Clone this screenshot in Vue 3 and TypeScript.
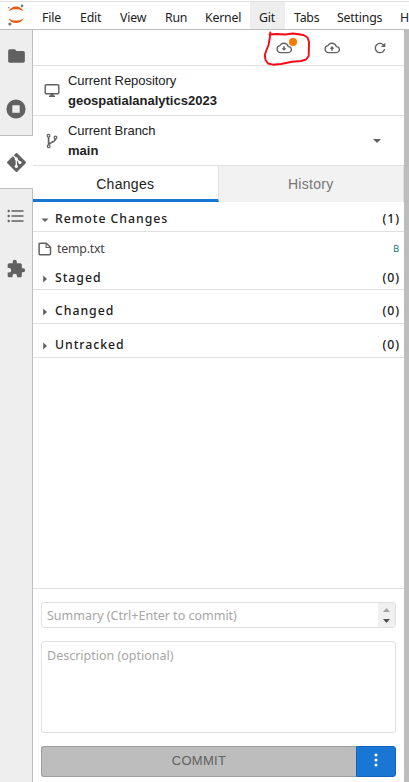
<script setup lang="ts">
interface MenuEntry { label: string; width: number; active?: boolean }
interface FileGroup { title: string; count: number; open: boolean; files: { name: string; status: string }[] }

const menu: MenuEntry[] = [
  { label: 'File', width: 38 },
  { label: 'Edit', width: 40 },
  { label: 'View', width: 45 },
  { label: 'Run', width: 40 },
  { label: 'Kernel', width: 54 },
  { label: 'Git', width: 35, active: true },
  { label: 'Tabs', width: 43 },
  { label: 'Settings', width: 63 },
  { label: 'H', width: 18 },
]

const groups: FileGroup[] = [
  { title: 'Remote Changes', count: 1, open: true, files: [{ name: 'temp.txt', status: 'B' }] },
  { title: 'Staged', count: 0, open: false, files: [] },
  { title: 'Changed', count: 0, open: false, files: [] },
  { title: 'Untracked', count: 0, open: false, files: [] },
]
</script>

<template>
  <div class="app">
    <header class="menubar">
      <div class="logo">
        <svg width="18" height="22" viewBox="0 0 18 22">
          <path d="M1.5 7.5C3 4 6 2.600 9 2.600S15 4 16.500 7.500C14.500 5.800 12 5.200 9 5.200S3.500 5.800 1.500 7.500Z" fill="#e65a14" />
          <path d="M1.500 14.200C3 17.700 6 19 9 19S15 17.700 16.500 14.200C14.500 15.900 12 16.500 9 16.500S3.500 15.900 1.500 14.200Z" fill="#e65a14" />
          <circle cx="15" cy="1.900" r="1.300" fill="#757575" />
          <circle cx="1.900" cy="3.800" r=".8" fill="#757575" />
          <circle cx="2.900" cy="20" r="1.600" fill="#757575" />
        </svg>
      </div>
      <nav class="menu">
        <span v-for="m in menu" :key="m.label" class="menu-item" :class="{ active: m.active }" :style="{ width: m.width + 'px' }">{{ m.label }}</span>
      </nav>
    </header>

    <div class="body">
      <aside class="sidebar">
        <div class="side-tab first">
          <svg width="21" height="20" viewBox="0 0 24 24"><path fill="#616161" d="M10 4H4c-1.100 0-2 .9-2 2v12c0 1.100.9 2 2 2h16c1.100 0 2-.9 2-2V8c0-1.100-.9-2-2-2h-8z" /></svg>
        </div>
        <div class="side-tab">
          <svg width="20" height="20" viewBox="0 0 20 20"><path fill="#616161" fill-rule="evenodd" d="M10 .4a9.600 9.600 0 1 0 0 19.200A9.600 9.600 0 0 0 10 .4ZM6.300 6.300h7.400v7.400H6.300Z" /></svg>
        </div>
        <div class="side-tab current">
          <svg width="21" height="21" viewBox="0 0 21 21">
            <rect x="3.500" y="3.500" width="14" height="14" rx="1" transform="rotate(45 10.500 10.500)" fill="#616161" />
            <path d="M7 3.300 10.300 6.800V14.500M10.300 6.800 14 10.500" fill="none" stroke="#fff" stroke-width="1.300" />
            <circle cx="10.300" cy="6.900" r="1.600" fill="#fff" /><circle cx="10.300" cy="14.300" r="1.600" fill="#fff" /><circle cx="13.900" cy="10.500" r="1.600" fill="#fff" />
          </svg>
        </div>
        <div class="side-tab">
          <svg width="18" height="14" viewBox="0 0 18 14" fill="#616161">
            <path d="M4.500 1.300h12v1.500h-12zM4.500 6.300h12v1.500h-12zM4.500 11.300h12v1.500h-12z" />
            <circle cx="1.700" cy="2" r="1.200" /><circle cx="1.700" cy="7" r="1.200" /><circle cx="1.700" cy="12" r="1.200" />
          </svg>
        </div>
        <div class="side-tab">
          <svg width="20" height="20" viewBox="0 0 24 24"><path fill="#616161" d="M20.500 11H19V7c0-1.100-.9-2-2-2h-4V3.500a2.500 2.500 0 0 0-5 0V5H4c-1.100 0-2 .9-2 2v3.800h1.500a2.700 2.700 0 0 1 0 5.400H2V20c0 1.100.9 2 2 2h3.800v-1.500a2.700 2.700 0 0 1 5.400 0V22H17c1.100 0 2-.9 2-2v-4h1.500a2.500 2.500 0 0 0 0-5z" /></svg>
        </div>
      </aside>

      <main class="panel">
        <div class="toolbar">
          <span class="tool">
            <svg width="16" height="16" viewBox="0 0 16 16" fill="none" stroke="#616161">
              <path d="M4.200 12.600A3.500 3.500 0 0 1 3.800 5.700 4.600 4.600 0 0 1 12.300 6.600 3 3 0 0 1 12.500 12.600Z" stroke-width="1.300" />
              <path d="M8 6.300v2.500" stroke-width="1.500" /><path d="M5.600 8.200h4.800L8 10.800Z" fill="#616161" stroke="none" />
            </svg>
            <i class="dot"></i>
            <svg class="marker" width="48" height="37" viewBox="0 0 48 37">
              <path d="M7.300 2.500 6.800 8 5.500 15 3.500 20 1.800 25 2.500 30 5 33.500 10 34.700 18 34 29 31.800 38 31 43 29.500 45.700 26 46 12 44.500 7.500 40.500 5 30 3.500 22 4.500 14 4 6.500 4.500" fill="none" stroke="#f80a14" stroke-width="1.900" stroke-linejoin="round" stroke-linecap="round" />
            </svg>
          </span>
          <span class="tool">
            <svg width="16" height="16" viewBox="0 0 16 16" fill="none" stroke="#616161">
              <path d="M4.200 12.600A3.500 3.500 0 0 1 3.800 5.700 4.600 4.600 0 0 1 12.300 6.600 3 3 0 0 1 12.500 12.600Z" stroke-width="1.300" />
              <path d="M8 8v2.700" stroke-width="1.500" /><path d="M5.600 8.700h4.800L8 6.100Z" fill="#616161" stroke="none" />
            </svg>
          </span>
          <span class="tool">
            <svg width="16" height="16" viewBox="0 0 18 18"><path fill="#616161" d="M9 13.500c-2.490 0-4.500-2.010-4.500-4.500S6.510 4.500 9 4.500c1.240 0 2.360.52 3.170 1.330L10 8h5V3l-1.760 1.760C12.150 3.680 10.660 3 9 3 5.690 3 3.010 5.690 3.010 9S5.690 15 9 15c2.970 0 5.430-2.160 5.900-5h-1.520c-.46 2-2.240 3.500-4.380 3.500z" /></svg>
          </span>
        </div>

        <div class="info">
          <svg class="info-icon" width="16" height="16" viewBox="0 0 16 16">
            <rect x="1.200" y="1.700" width="13.600" height="9" rx="1" fill="none" stroke="#616161" stroke-width="1.400" />
            <path d="M6.500 11h3v1.500H11V14H5v-1.500h1.500Z" fill="#616161" />
          </svg>
          <div class="info-text"><span>Current Repository</span><b>geospatialanalytics2023</b></div>
        </div>
        <div class="info">
          <svg class="info-icon" width="16" height="16" viewBox="0 0 16 16" fill="none" stroke="#616161" stroke-width="1.200">
            <circle cx="4.500" cy="2.700" r="1.400" /><circle cx="4.700" cy="13.300" r="1.400" /><circle cx="11.500" cy="4.500" r="1.400" />
            <path d="M4.600 4.200V11.800M11.300 6C11.200 10 5.500 8.500 4.900 11.800" stroke-width="1.700" />
          </svg>
          <div class="info-text"><span>Current Branch</span><b>main</b></div>
          <svg class="caret" width="8" height="4" viewBox="0 0 8 4"><path d="M0 0h8L4 4Z" fill="#616161" /></svg>
        </div>

        <div class="tabs">
          <div class="tab selected">Changes</div>
          <div class="tab">History</div>
        </div>

        <div class="files">
          <section v-for="g in groups" :key="g.title" class="group">
            <div class="group-head" :class="{ open: g.open }">
              <svg v-if="g.open" class="arrow" width="8" height="8" viewBox="0 0 8 8"><path d="M.5 2.500h7L4 6Z" fill="#616161" /></svg>
              <svg v-else class="arrow" width="8" height="8" viewBox="0 0 8 8"><path d="M2.200.5v7L6 4Z" fill="#616161" /></svg>
              <span class="title">{{ g.title }}</span>
              <span class="count">({{ g.count }})</span>
            </div>
            <div v-for="f in g.files" :key="f.name" class="file">
              <svg width="14" height="14" viewBox="0 0 14 14" fill="none" stroke="#616161" stroke-width="1.500" stroke-linejoin="round">
                <path d="M2 1.200h6.300L12.500 5.300V11.800q0 .9-.9.900H2q-.9 0-.9-.9V2.100q0-.9.900-.9Z" /><path d="M8.100 1.500v4h4.200" stroke-width="1.200" />
              </svg>
              <span class="name">{{ f.name }}</span>
              <span class="status">{{ f.status }}</span>
            </div>
          </section>
        </div>

        <form class="commit" @submit.prevent>
          <div class="field summary">
            <span>Summary (Ctrl+Enter to commit)</span>
            <div class="stepper">
              <svg width="7" height="4" viewBox="0 0 7 4"><path d="M0 4h7L3.500 0Z" fill="#a3a3a3" /></svg>
              <svg width="7" height="4" viewBox="0 0 7 4"><path d="M0 0h7L3.500 4Z" fill="#505050" /></svg>
            </div>
          </div>
          <div class="field description"><span>Description (optional)</span></div>
          <div class="actions">
            <button class="submit" type="button">COMMIT</button>
            <button class="more" type="button"><svg width="4" height="14" viewBox="0 0 4 14" fill="#fff"><circle cx="2" cy="2" r="1.500" /><circle cx="2" cy="7" r="1.500" /><circle cx="2" cy="12" r="1.500" /></svg></button>
          </div>
        </form>
      </main>
      <div class="gutter"></div>
    </div>
  </div>
</template>

<style>
body { margin: 0; overflow: hidden; background: #fff; }
</style>

<style scoped>
* { box-sizing: border-box; }
svg { display: block; flex: none; }
.app { width: 409px; height: 782px; display: flex; flex-direction: column; overflow: hidden; font-family: "Noto Sans", sans-serif; color: #212121; }
.menubar { height: 30px; flex: none; display: flex; padding-top: 2px; border-bottom: 1px solid #bdbdbd; background: linear-gradient(#fff 1px, #e0e0e0 1px, #e0e0e0 2px, #fff 2px); }
.logo { width: 33px; flex: none; padding: 2px 0 0 7px; }
.menu { display: flex; white-space: nowrap; font-size: 12.300px; line-height: 31px; letter-spacing: -.2px; }
.menu-item { flex: none; padding-left: 9px; height: 27px; }
.menu-item.active { background: #eee; }
.body { flex: 1; min-height: 0; display: flex; }
.sidebar { width: 33px; flex: none; background: #eee; border-right: 1px solid #bdbdbd; }
.side-tab { height: 53px; display: flex; align-items: center; justify-content: center; }
.side-tab.first { height: 52px; }
.side-tab.current { height: 54px; width: 33px; background: #fff; border-top: 1px solid #bdbdbd; border-bottom: 1px solid #bdbdbd; padding-right: 1px; }
.panel { width: 371px; flex: none; display: flex; flex-direction: column; }
.gutter { width: 5px; flex: none; background: #bdbdbd; }
.toolbar { height: 36px; flex: none; display: flex; justify-content: flex-end; gap: 32px; padding: 10px 16px 0 0; border-bottom: 1px solid #e0e0e0; }
.tool { position: relative; width: 16px; height: 16px; }
.dot { position: absolute; left: 13px; top: -2px; width: 8px; height: 8px; border-radius: 50%; background: #f57c00; }
.marker { position: absolute; left: -13px; top: -10px; }
.info { height: 50px; flex: none; display: flex; align-items: center; padding: 0 23px 0 11px; border-bottom: 1px solid #e0e0e0; font-family: "Liberation Sans", sans-serif; font-size: 13px; line-height: 20px; }
.info-icon { margin-right: 8px; }
.info-text { flex: 1; display: flex; flex-direction: column; }
.info-text span { letter-spacing: -.05px; }
.tabs { display: flex; height: 36px; flex: none; font-family: "Liberation Sans", sans-serif; font-size: 14px; line-height: 36px; text-align: center; letter-spacing: .3px; }
.tab { flex: 1; background: #f2f2f2; color: #757575; border-right: 1px solid #e0e0e0; }
.tab.selected { background: #fff; color: #212121; border-bottom: 3px solid #1976d2; }
.files { flex: 1; min-height: 0; }
.group-head { height: 34px; display: flex; align-items: center; padding: 7px 4px 0 8px; border-bottom: 1px solid #e0e0e0; font-size: 12.300px; font-weight: 500; letter-spacing: .95px; }
.group-head.open { height: 30px; padding-top: 3px; }
.group:nth-child(2) .group-head { height: 25px; padding-top: 0; }
.arrow { margin: 3px 6px 0 0; }
.title { flex: 1; }
.file { height: 33px; display: flex; align-items: center; padding: 0 5px 0 5px; font-size: 12.300px; color: #424242; letter-spacing: -.2px; }
.name { flex: 1; margin-left: 5px; }
.status { font-size: 9px; color: #00796b; }
.commit { height: 194px; flex: none; border-top: 1px solid #e0e0e0; padding: 13px 8px 0; display: flex; flex-direction: column; }
.field { border: 1px solid #e0e0e0; border-radius: 3px; font-size: 12.500px; color: #a6a6a6; display: flex; justify-content: space-between; padding-left: 5px; flex: none; }
.summary { height: 26px; line-height: 26px; }
.stepper { width: 17px; background: #f0f0f0; display: flex; flex-direction: column; align-items: center; justify-content: space-between; padding: 5px 0 4px; }
.description { height: 92px; margin-top: 13px; line-height: 28px; }
.actions { display: flex; height: 31px; margin-top: 13px; flex: none; }
.actions button { appearance: none; margin: 0; font-family: "Liberation Sans", sans-serif; font-size: 13px; }
.actions .submit { flex: 1; padding: 0 0 3px; border: 1px solid #9e9e9e; border-right: 0; border-radius: 3px 0 0 3px; background: #bdbdbd; color: #616161; letter-spacing: .3px; }
.actions .more { width: 40px; padding: 0 0 4px; background: #1976d2; border: 1px solid #1565c0; border-radius: 0 3px 3px 0; display: flex; align-items: center; justify-content: center; }
</style>
